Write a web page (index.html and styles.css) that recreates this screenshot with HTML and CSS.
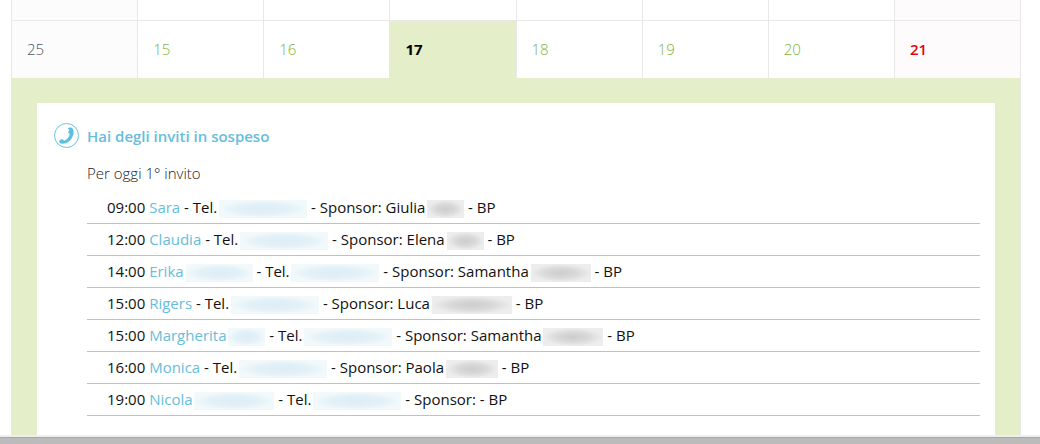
FILE: index.html
```
<!DOCTYPE html>
<html lang="it">
<head>
    <meta charset="UTF-8">
    <meta name="viewport" content="width=device-width, initial-scale=1.0">
    <title>Calendario inviti</title>
    <link rel="stylesheet" href="styles.css">
</head>
<body>

    <table class="calendar">
        <tr class="prev">
            <td class="week"></td>
            <td></td>
            <td></td>
            <td></td>
            <td></td>
            <td></td>
            <td></td>
            <td class="sunday"></td>
        </tr>
        <tr class="days">
            <td class="week">25</td>
            <td>15</td>
            <td>16</td>
            <td class="today">17</td>
            <td>18</td>
            <td>19</td>
            <td>20</td>
            <td class="sunday">21</td>
        </tr>
        <tr>
            <td class="detail" colspan="8">
                <div class="panel">
                    <h2 class="title">
                        <svg class="phone" viewBox="0 0 26 26" width="26" height="26" aria-hidden="true">
                            <circle cx="13.5" cy="12.5" r="12" fill="none" stroke="#65c6df" stroke-width="1"/>
                            <path fill="#5bc0de" d="M15 5.6 C15.2 4.6 17 4.2 18.4 4.5 C20 5 20.7 7 20.6 9.4 C20.2 15.6 15.2 20.6 9.6 20.8 C7.8 20.8 6.3 20 6.2 18.8 C6.2 17.6 7.2 16.4 8.4 16.2 C9.6 16 10.8 16.8 11.2 17.8 C14 16.8 16.4 14 16.8 10.8 C15.8 10.6 15 9.8 15 8.8 C15.2 8.2 16.2 8 16.4 7.4 C16.4 6.6 15 6.6 15 5.6 Z"/>
                        </svg>
                        Hai degli inviti in sospeso
                    </h2>
                    <p class="subtitle">Per oggi 1° invito</p>
                    <ul class="invites">
                        <li>09:00 <a href="#">Sara</a> - Tel. <span class="hidden tel"></span> - Sponsor: Giulia <span class="hidden name tiny"></span> - BP</li>
                        <li>12:00 <a href="#">Claudia</a> - Tel. <span class="hidden tel"></span> - Sponsor: Elena <span class="hidden name tiny"></span> - BP</li>
                        <li>14:00 <a href="#">Erika <span class="hidden client large"></span></a> - Tel. <span class="hidden tel"></span> - Sponsor: Samantha <span class="hidden name medium"></span> - BP</li>
                        <li>15:00 <a href="#">Rigers</a> - Tel. <span class="hidden tel"></span> - Sponsor: Luca <span class="hidden name long"></span> - BP</li>
                        <li>15:00 <a href="#">Margherita <span class="hidden client tiny"></span></a> - Tel. <span class="hidden tel"></span> - Sponsor: Samantha <span class="hidden name medium"></span> - BP</li>
                        <li>16:00 <a href="#">Monica</a> - Tel. <span class="hidden tel"></span> - Sponsor: Paola <span class="hidden name short"></span> - BP</li>
                        <li>19:00 <a href="#">Nicola <span class="hidden client long"></span></a> - Tel. <span class="hidden tel"></span> - Sponsor: - BP</li>
                    </ul>
                </div>
            </td>
        </tr>
    </table>

    <div class="bottom"></div>

</body>
</html>
```
FILE: styles.css
```
body {
    margin: 0;
    font-family: "Open Sans", sans-serif;
    font-size: 15px;
    line-height: 20px;
    color: #111;
    background-color: #fff;
}

.calendar {
    width: calc(100% - 30px);
    margin-left: 11px;
    table-layout: fixed;
    border-collapse: separate;
    border-spacing: 0;
    border-right: 1px solid #e8e8e8;
}

.calendar td {
    padding: 0;
    border-left: 1px solid #e8e8e8;
}

.prev td {
    height: 20px;
}

.calendar .days td {
    padding: 18px 15px 19px;
    height: 20px;
    border-top: 1px solid #e8e8e8;
    font-weight: 300;
    color: #7cb342;
}

.calendar .week {
    background-color: #fcfcfc;
}

.calendar .days .week {
    color: #555;
}

.calendar .sunday {
    background-color: #fdfbfc;
}

.calendar .days .sunday {
    font-weight: 600;
    color: #e00010;
}

.calendar .days .today {
    background-color: #e4eec8;
    border-left-color: #e4eec8;
    font-weight: 700;
    color: #000;
}

.calendar .detail {
    padding: 25px 25px 0;
    background-color: #e4eec8;
}

.panel {
    padding: 20px 15px 19px 16px;
    background-color: #fff;
}

.title {
    display: flex;
    align-items: center;
    gap: 8px;
    margin: 0;
    font-size: 15px;
    font-weight: 600;
    line-height: 26px;
    color: #65bedb;
}

.subtitle {
    margin: 14px 0 9px 34px;
    font-weight: 300;
    color: #222;
}

.invites {
    margin: 0 0 0 34px;
    padding: 0;
    list-style: none;
}

.invites li {
    padding-left: 20px;
    border-bottom: 1px solid #bacb9a;
    line-height: 31px;
    white-space: nowrap;
}

.invites a {
    color: #65bedb;
    text-decoration: none;
}

/* masked personal data */
.hidden {
    display: inline-block;
    height: 18px;
    margin-left: -2px;
    vertical-align: middle;
}

.tel,
.client {
    background: radial-gradient(closest-side, #dceef6, #e3f1f7 60%, #f2f9fb);
}

.tel {
    width: 88px;
}

.name {
    background: radial-gradient(closest-side, #cdcdcd, #d8d8d8 50%, #ededed);
}

.tiny {
    width: 37px;
}

.short {
    width: 52px;
}

.medium {
    width: 60px;
}

.large {
    width: 67px;
}

.long {
    width: 80px;
}

.bottom {
    height: 7px;
    border-top: 2px solid #eee;
    background-color: #bbb;
    box-shadow: inset 0 1px 0 #a8a8a8;
}
```
